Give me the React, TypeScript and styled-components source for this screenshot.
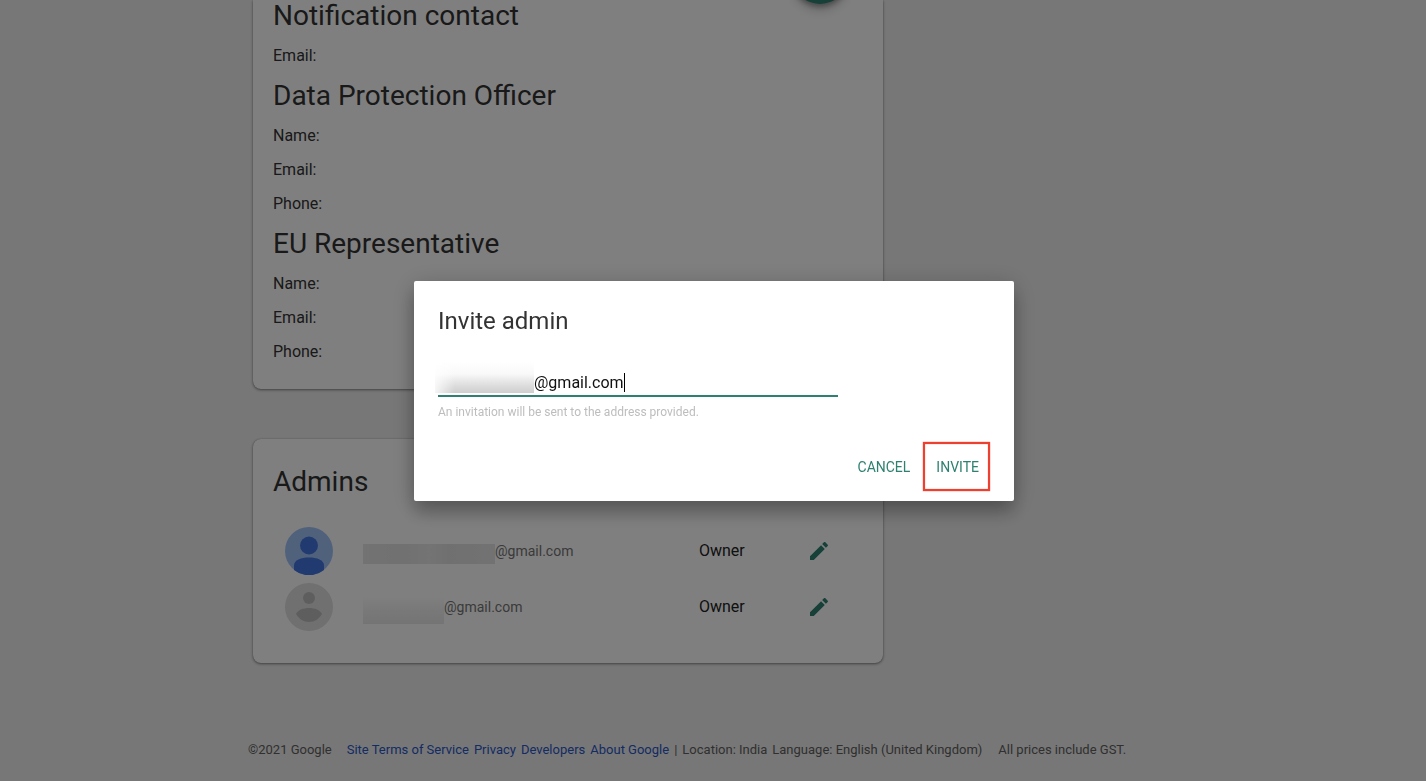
import React, { useState } from "react";
import styled, { createGlobalStyle } from "styled-components";

const GlobalStyle = createGlobalStyle`
  *, *::before, *::after { box-sizing: border-box; }
  html, body { margin: 0; }
  body {
    background: #efefef;
    color: #333;
    font-family: Roboto, "Liberation Sans", sans-serif;
    font-size: 16px;
    line-height: 24px;
    overflow: hidden;
  }
  h1, h2, p, dl, dt { margin: 0; font-weight: 400; }
`;

const Page = styled.div`
  position: relative;
  overflow: hidden;
  min-height: 100vh;
  display: flex;
  flex-direction: column;
`;

const Content = styled.main`
  width: 630px;
  max-width: 100%;
  margin-left: 253px;
  display: flex;
  flex-direction: column;
  gap: 50px;
`;

const Card = styled.section<{ $continued?: boolean }>`
  position: relative;
  background: #fff;
  border-radius: ${(p) => (p.$continued ? "0 0 8px 8px" : "8px")};
  box-shadow: 0 1px 3px rgba(0, 0, 0, 0.45), 0 0 1px rgba(0, 0, 0, 0.3);
  padding: ${(p) => (p.$continued ? "0 20px 20px" : "25px 20px 28px")};
`;

const Heading = styled.h2`
  font-size: 28px;
  line-height: 36px;
  color: #333;
`;

const ContactGroup = styled.div`
  display: flex;
  flex-direction: column;
  & + & {
    margin-top: 7px;
  }
  ${Heading} {
    line-height: 32px;
    margin-bottom: 7px;
  }
`;

const FieldName = styled.p`
  line-height: 34px;
  color: #333;
`;

const Fab = styled.button`
  position: absolute;
  top: -52px;
  right: 35px;
  width: 56px;
  height: 56px;
  border: 0;
  border-radius: 50%;
  background: #2e8070;
  box-shadow: 0 3px 5px rgba(0, 0, 0, 0.3), 0 6px 12px rgba(0, 0, 0, 0.2);
`;

const AdminList = styled.ul`
  list-style: none;
  margin: 23px 0 0;
  padding: 0 24px 0 12px;
`;

const AdminRow = styled.li`
  display: grid;
  grid-template-columns: 48px 1fr 100px 40px;
  align-items: center;
  height: 56px;
`;

const Avatar = styled.svg`
  width: 48px;
  height: 48px;
  display: block;
`;

const Address = styled.div`
  display: flex;
  align-items: center;
  padding-left: 30px;
  font-size: 14px;
  color: #757575;
`;

const Masked = styled.span<{ $width: number; $soft?: boolean }>`
  flex: none;
  width: ${(p) => p.$width}px;
  height: ${(p) => (p.$soft ? 28 : 20)}px;
  margin-top: 6px;
  background: ${(p) =>
    p.$soft
      ? "linear-gradient(#ffffff, #f2f2f2 50%, #e9e9e9)"
      : "linear-gradient(90deg, #e6e6e6, #e2e2e2 30%, #e8e8e8 50%, #e1e1e1 65%, #e5e5e5)"};
`;

const Role = styled.span`
  color: #222;
`;

const EditButton = styled.button`
  width: 40px;
  height: 40px;
  padding: 8px;
  border: 0;
  background: none;
  color: #2e8070;
  svg {
    display: block;
    width: 24px;
    height: 24px;
    fill: currentColor;
  }
`;

const Footer = styled.footer`
  display: flex;
  align-items: center;
  margin: 75px 0 0 248px;
  font-size: 13px;
  line-height: 24px;
  color: #616161;
  white-space: nowrap;
`;

const FooterLinks = styled.nav`
  display: flex;
  gap: 5px;
  margin: 0 5px 0 15px;
  a {
    color: #2a56c6;
    text-decoration: none;
  }
`;

const FooterInfo = styled.span<{ $gap: number }>`
  margin-left: ${(p) => p.$gap}px;
`;

const Scrim = styled.div`
  position: fixed;
  inset: 0;
  display: flex;
  align-items: center;
  justify-content: center;
  padding-left: 2px;
  background: rgba(0, 0, 0, 0.5);
`;

const Dialog = styled.form`
  display: flex;
  flex-direction: column;
  width: 600px;
  max-width: 90%;
  min-height: 220px;
  padding: 24px 24px 10px;
  background: #fff;
  border-radius: 2px;
  box-shadow: 0 12px 17px rgba(0, 0, 0, 0.2), 0 4px 24px rgba(0, 0, 0, 0.22);
`;

const DialogTitle = styled.h1`
  font-size: 24px;
  line-height: 32px;
  color: #333;
`;

const EmailField = styled.label`
  display: flex;
  align-items: flex-end;
  width: 400px;
  max-width: 100%;
  height: 36px;
  margin-top: 24px;
  border-bottom: 2px solid #2e8070;
  cursor: text;
`;

const InputMask = styled.span`
  flex: none;
  width: 99px;
  height: 32px;
  margin: 0 0 2px -3px;
  background:
    linear-gradient(90deg, rgba(255, 255, 255, 0.8), transparent 20%),
    linear-gradient(#fff, #f9f9f9 40%, #dedede 75%, #cecece);
`;

const EmailInput = styled.input`
  field-sizing: content;
  height: 24px;
  padding: 0;
  border: 0;
  outline: 0;
  background: none;
  font: inherit;
  color: #111;
  caret-color: transparent;
`;

const Caret = styled.span`
  width: 1px;
  height: 19px;
  margin-bottom: 3px;
  background: #000;
`;

const Hint = styled.p`
  margin-top: 7px;
  font-size: 12px;
  line-height: 16px;
  color: #bdbdbd;
`;

const Actions = styled.div`
  display: flex;
  justify-content: flex-end;
  margin-top: auto;
`;

const ActionButton = styled.button<{ $marked?: boolean }>`
  height: 49px;
  padding: 2px ${(p) => (p.$marked ? 9 : 11)}px 0 11px;
  border: 2px solid ${(p) => (p.$marked ? "#ee402f" : "transparent")};
  box-shadow: ${(p) => (p.$marked ? "0 0 1px #ee402f, inset 0 0 1px #ee402f" : "none")};
  background: none;
  font: inherit;
  font-size: 14px;
  color: #2e8070;
`;

const contactGroups = [
  { title: "Notification contact", fields: ["Email:"] },
  { title: "Data Protection Officer", fields: ["Name:", "Email:", "Phone:"] },
  { title: "EU Representative", fields: ["Name:", "Email:", "Phone:"] },
];

const admins = [
  { id: 1, maskWidth: 132, active: true },
  { id: 2, maskWidth: 81, active: false },
];

const links = ["Site Terms of Service", "Privacy", "Developers", "About Google"];

function UserAvatar({ active }: { active: boolean }) {
  return active ? (
    <Avatar viewBox="0 0 48 48" aria-hidden="true">
      <circle cx="24" cy="24" r="24" fill="#a0c3f8" />
      <circle cx="24" cy="18.5" r="9" fill="#4374e0" />
      <path
        d="M9 43V38.500C9 33 16 30.500 24 30.500S39 33 39 38.500V43A24 24 0 0 1 9 43Z"
        fill="#4374e0"
      />
    </Avatar>
  ) : (
    <Avatar viewBox="0 0 48 48" aria-hidden="true">
      <circle cx="24" cy="24" r="24" fill="#e0e0e0" />
      <circle cx="24" cy="15" r="6" fill="#bdbdbd" />
      <path d="M11 31C13 27 18 25 24 25S35 27 37 31C34 36 29.500 39 24 39S14 36 11 31Z" fill="#bdbdbd" />
    </Avatar>
  );
}

export default function App() {
  const [email, setEmail] = useState("@gmail.com");

  return (
    <>
      <GlobalStyle />
      <Page>
        <Content>
          <Card $continued>
            <Fab type="button" aria-label="Edit contacts" />
            {contactGroups.map((group) => (
              <ContactGroup key={group.title}>
                <Heading>{group.title}</Heading>
                {group.fields.map((field) => (
                  <FieldName key={field}>{field}</FieldName>
                ))}
              </ContactGroup>
            ))}
          </Card>
          <Card>
            <Heading>Admins</Heading>
            <AdminList>
              {admins.map((admin) => (
                <AdminRow key={admin.id}>
                  <UserAvatar active={admin.active} />
                  <Address>
                    <Masked $width={admin.maskWidth} $soft={!admin.active} />
                    @gmail.com
                  </Address>
                  <Role>Owner</Role>
                  <EditButton type="button" aria-label="Edit admin">
                    <svg viewBox="0 0 24 24">
                      <path d="M3 17.250V21h3.750L17.810 9.940l-3.750-3.750L3 17.250zM20.710 7.040c.39-.39.39-1.020 0-1.410l-2.340-2.340c-.39-.39-1.020-.39-1.410 0l-1.830 1.830 3.750 3.750 1.830-1.830z" />
                    </svg>
                  </EditButton>
                </AdminRow>
              ))}
            </AdminList>
          </Card>
        </Content>
        <Footer>
          <span>©2021 Google</span>
          <FooterLinks>
            {links.map((link) => (
              <a key={link} href="#">
                {link}
              </a>
            ))}
          </FooterLinks>
          <span>|</span>
          <FooterInfo $gap={5}>Location: India</FooterInfo>
          <FooterInfo $gap={5}>Language: English (United Kingdom)</FooterInfo>
          <FooterInfo $gap={16}>All prices include GST.</FooterInfo>
        </Footer>
      </Page>
      <Scrim>
        <Dialog role="dialog" aria-labelledby="invite-title" onSubmit={(e) => e.preventDefault()}>
          <DialogTitle id="invite-title">Invite admin</DialogTitle>
          <EmailField>
            <InputMask />
            <EmailInput
              type="text"
              aria-label="Email address"
              value={email}
              onChange={(e) => setEmail(e.target.value)}
            />
            <Caret />
          </EmailField>
          <Hint>An invitation will be sent to the address provided.</Hint>
          <Actions>
            <ActionButton type="button">CANCEL</ActionButton>
            <ActionButton type="submit" $marked>
              INVITE
            </ActionButton>
          </Actions>
        </Dialog>
      </Scrim>
    </>
  );
}
